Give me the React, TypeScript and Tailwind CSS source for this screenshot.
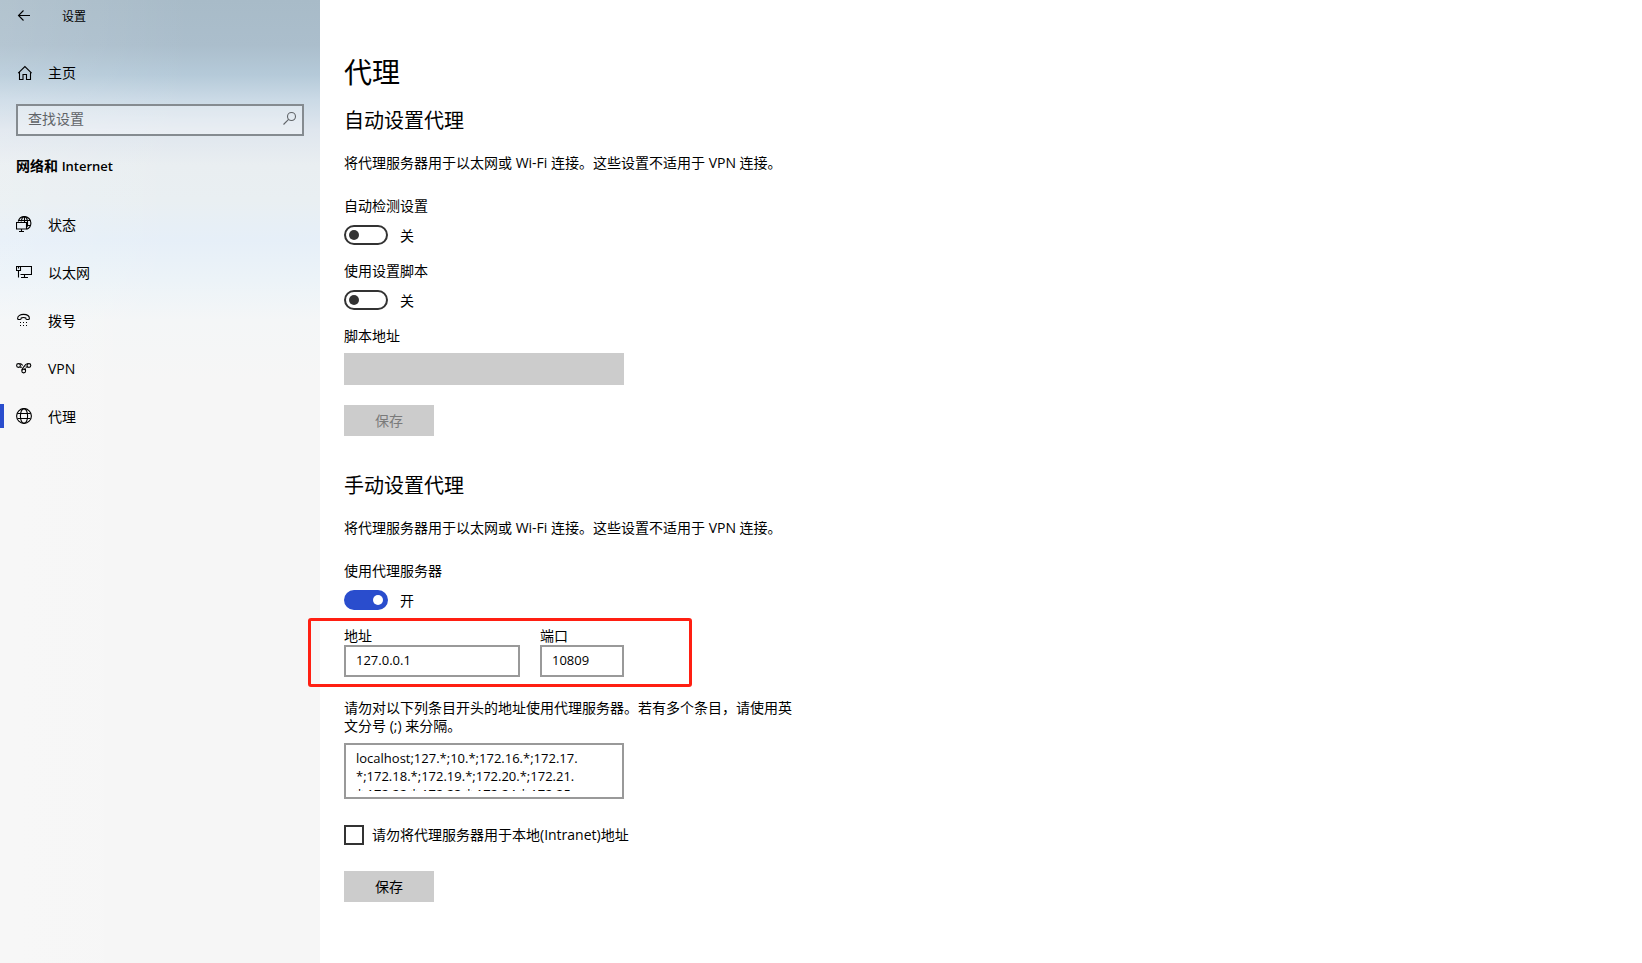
import type { ReactNode } from "react";

const navItems = [
  { label: "状态", icon: <StatusIcon /> },
  { label: "以太网", icon: <EthernetIcon /> },
  { label: "拨号", icon: <DialUpIcon /> },
  { label: "VPN", icon: <VpnIcon /> },
  { label: "代理", icon: <GlobeIcon />, active: true },
];

const bypassList = [
  "localhost;127.*;10.*;172.16.*;172.17.",
  "*;172.18.*;172.19.*;172.20.*;172.21.",
  "*;172.22.*;172.23.*;172.24.*;172.25.",
].join("\n");

function Icon({ children }: { children: ReactNode }) {
  return (
    <svg
      width="16"
      height="16"
      viewBox="0 0 16 16"
      fill="none"
      stroke="currentColor"
      strokeWidth="1.1"
      aria-hidden="true"
      className="shrink-0"
    >
      {children}
    </svg>
  );
}

function BackIcon() {
  return (
    <Icon>
      <path d="M14 7.5H2.5M7.5 2.5l-5 5 5 5" />
    </Icon>
  );
}

function HomeIcon() {
  return (
    <Icon>
      <path d="M2.2 8.2 8.9 1.5l6.700 6.700M3.500 7v7.500h3.500V9.500h3.500v5H14.500V7" />
    </Icon>
  );
}

function SearchIcon() {
  return (
    <Icon>
      <circle cx="10.500" cy="5.500" r="4" />
      <path d="M7.600 8.400 2.500 13.500" />
    </Icon>
  );
}

function StatusIcon() {
  return (
    <Icon>
      <path d="M2.200 5.500C3 2.600 5.500.6 8.400.6c3.600 0 6.500 2.900 6.500 6.500 0 3-1.700 5.300-4.200 6.200" />
      <path d="M5.200 5.500C5.700 2.700 7 .6 8.400.6s2.700 2.100 3.100 4.900c.2 1.900.1 3.900-.5 5.500" />
      <path d="M3 4.500h11.200M11 9.500h3.300M8.500.6v5.400" />
      <path d="M.5 6.500h10v6.500H.5zM5.500 13v2.500M3 15.500h5" />
    </Icon>
  );
}

function EthernetIcon() {
  return (
    <Icon>
      <path d="M5 2.500h10.500v8H4.500M8.500 10.500v3M5 13.500h7M.5 2.500h4v4h-4zM2.500 6.500v7M2.500 2.500v2" />
    </Icon>
  );
}

function DialUpIcon() {
  return (
    <Icon>
      <path d="M1.600 6.500C1.600 3.600 4.500 2.400 7.500 2.400s5.900 1.200 5.900 4.100c0 .8-.5 1-1.200 1h-1.400c-.8 0-1-.4-1-1.500-.8-.6-3.800-.6-4.600 0 0 1.100-.2 1.500-1 1.500H2.800c-.7 0-1.200-.2-1.200-1Z" />
      <path d="M4 10.500h1M7 10.500h1M10 10.500h1M4 13.500h1M7 13.500h1M10 13.500h1" />
    </Icon>
  );
}

function VpnIcon() {
  return (
    <Icon>
      <circle cx="2.500" cy="5.500" r="1.900" />
      <circle cx="12.900" cy="5.500" r="1.900" />
      <circle cx="7.700" cy="11" r="1.900" />
      <path d="M3.500 3.900c1.500-.7 2.400.3 3.200 1.700M11.900 3.900c-1.700-.7-2.600.7-3.500 2.200S5.900 8 5.900 10.500M3.800 7c.8.500 1.400.4 2.100-.2M9.600 10.500c0-1.100-.3-1.900-.8-2.500M9.700 6.600c.5.600 1.100.8 1.900.4" />
    </Icon>
  );
}

function GlobeIcon() {
  return (
    <Icon>
      <circle cx="8" cy="8" r="7.400" />
      <ellipse cx="8" cy="8" rx="3.600" ry="7.400" />
      <path d="M1.500 5.500h13M1.500 10.500h13" />
    </Icon>
  );
}

function Toggle({ id, label, on = false }: { id: string; label: string; on?: boolean }) {
  return (
    <div>
      <label htmlFor={id} className="block">
        {label}
      </label>
      <div className="mt-[10px] flex h-5 items-center gap-3">
        <input
          id={id}
          type="checkbox"
          role="switch"
          defaultChecked={on}
          className="flex h-5 w-11 appearance-none items-center rounded-full border-2 border-[#333] px-[3px] before:size-[10px] before:rounded-full before:bg-[#333] checked:justify-end checked:border-[#2a4dcd] checked:bg-[#2a4dcd] checked:before:bg-white"
        />
        <span className="pt-[2px]">{on ? "开" : "关"}</span>
      </div>
    </div>
  );
}

function Sidebar() {
  return (
    <aside className="w-80 shrink-0 bg-[linear-gradient(to_right,rgba(255,255,255,0.12),transparent_60%),linear-gradient(to_bottom,#a8bbc8_0px,#abbecc_45px,#b5cad9_75px,#cbdae6_100px,#dfe6ee_130px,#e9eef1_165px,#e9eff2_200px,#e6eff8_240px,#ecf3f8_280px,#f4f6f7_320px,#f6f6f6_380px)]">
      <header className="flex h-8 items-center pl-4">
        <button type="button" aria-label="返回">
          <BackIcon />
        </button>
        <span className="ml-[30px] pt-[2px] text-xs">设置</span>
      </header>

      <a href="#home" className="mt-[21px] flex h-10 items-center gap-4 pl-4">
        <HomeIcon />
        <span>主页</span>
      </a>

      <div className="mx-4 mt-[11px] flex h-8 items-center border-2 border-[#858b90] bg-white/30 pr-[5px] pb-[2px] pl-[10px] text-[#606468]">
        <input
          type="search"
          aria-label="查找设置"
          placeholder="查找设置"
          className="min-w-0 flex-1 bg-transparent outline-none placeholder:text-[#606468]"
        />
        <SearchIcon />
      </div>

      <h2 className="mx-4 mt-5 leading-5 font-semibold">
        网络和 <span className="text-[13px]">Internet</span>
      </h2>

      <nav className="mt-6">
        {navItems.map((item) => (
          <a
            key={item.label}
            href="#"
            aria-current={item.active ? "page" : undefined}
            className="flex h-12 items-center"
          >
            <span className={item.active ? "h-6 w-1 bg-[#2a4dcd]" : "h-6 w-1"} />
            <span className="mr-4 ml-3">{item.icon}</span>
            <span className="pt-[2px]">{item.label}</span>
          </a>
        ))}
      </nav>
    </aside>
  );
}

export default function App() {
  return (
    <div
      lang="zh-CN"
      className="flex min-h-screen bg-white font-['Open_Sans','Noto_Sans_CJK_SC',sans-serif] text-sm leading-[18px] text-black"
    >
      <Sidebar />

      <main className="min-w-0 flex-1 px-6 pt-[54px] pb-12">
        <h1 className="text-[28px] leading-9">代理</h1>

        {/* Automatic proxy */}
        <section>
          <h2 className="mt-[17px] text-xl leading-7">自动设置代理</h2>
          <p className="mt-[19px] mb-[25px]">
            将代理服务器用于以太网或 Wi-Fi 连接。这些设置不适用于 VPN 连接。
          </p>
          <div className="flex flex-col gap-[17px]">
            <Toggle id="auto-detect" label="自动检测设置" />
            <Toggle id="use-script" label="使用设置脚本" />
            <div>
              <label htmlFor="script-address" className="block">
                脚本地址
              </label>
              <input
                id="script-address"
                type="text"
                disabled
                className="mt-2 block h-8 w-[280px] bg-[#ccc] px-3"
              />
            </div>
          </div>
          <button type="button" disabled className="mt-5 block h-[31px] w-[90px] bg-[#ccc] text-[#7a7a7a]">
            保存
          </button>
        </section>

        {/* Manual proxy */}
        <section>
          <h2 className="mt-9 text-xl leading-7">手动设置代理</h2>
          <p className="mt-[19px] mb-[25px]">
            将代理服务器用于以太网或 Wi-Fi 连接。这些设置不适用于 VPN 连接。
          </p>
          <Toggle id="use-proxy" label="使用代理服务器" on />

          <div className="relative mt-[17px] flex gap-5">
            <div>
              <label htmlFor="address" className="block">
                地址
              </label>
              <input
                id="address"
                type="text"
                defaultValue="127.0.0.1"
                className="block h-8 w-44 border-2 border-[#999] px-[10px] pb-[2px] text-[13px]"
              />
            </div>
            <div>
              <label htmlFor="port" className="block">
                端口
              </label>
              <input
                id="port"
                type="text"
                defaultValue="10809"
                className="block h-8 w-[84px] border-2 border-[#999] px-[10px] pb-[2px] text-[13px]"
              />
            </div>
            <div className="pointer-events-none absolute -top-[9px] -left-9 h-[69px] w-96 rounded-[3px] border-3 border-[#ff1f12]" />
          </div>

          <label htmlFor="bypass" className="mt-[22px] block max-w-[450px]">
            请勿对以下列条目开头的地址使用代理服务器。若有多个条目，请使用英文分号 (;) 来分隔。
          </label>
          <div className="mt-2 w-[280px] border-2 border-[#999] px-[10px] pt-1 pb-[6px]">
            <textarea
              id="bypass"
              defaultValue={bypassList}
              className="block h-[42px] w-full resize-none overflow-hidden text-[13px] leading-[18px] outline-none"
            />
          </div>

          <label className="mt-[26px] flex h-5 items-center gap-2">
            <input
              type="checkbox"
              className="size-5 appearance-none border-2 border-[#333] checked:bg-[#2a4dcd]"
            />
            请勿将代理服务器用于本地(Intranet)地址
          </label>
          <button type="button" className="mt-[26px] block h-[31px] w-[90px] bg-[#ccc]">
            保存
          </button>
        </section>
      </main>
    </div>
  );
}
